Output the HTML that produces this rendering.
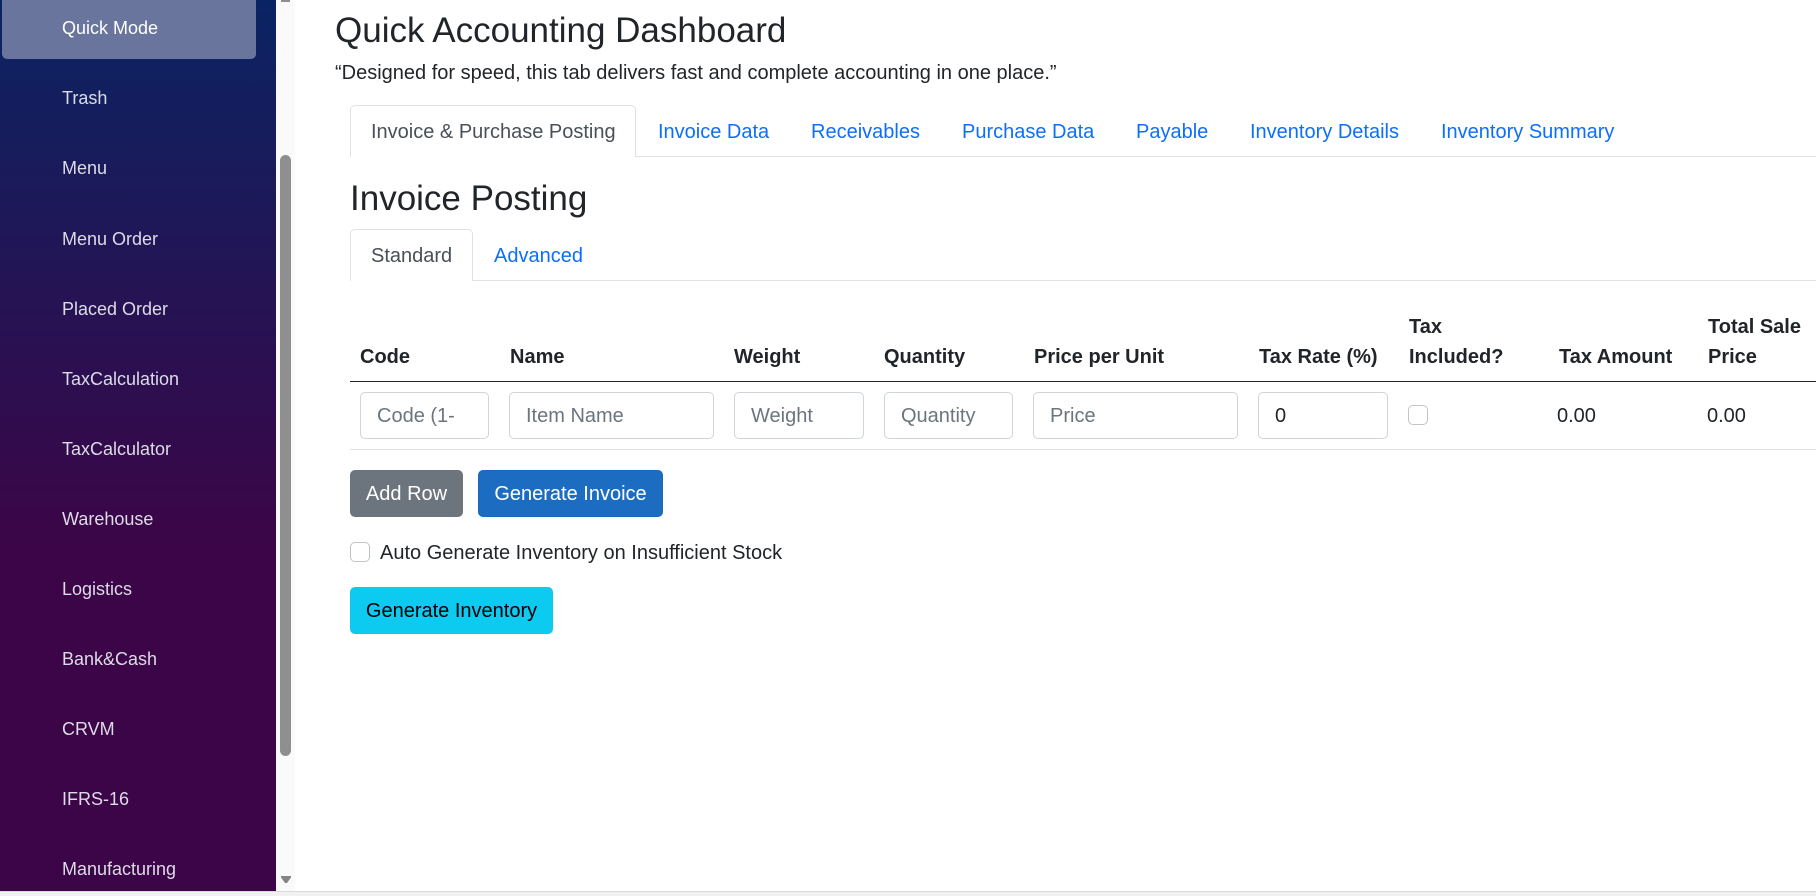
<!DOCTYPE html>
<html lang="en">
<head>
<meta charset="utf-8">
<title>Quick Accounting Dashboard</title>
<style>
html,body{margin:0;padding:0;width:1816px;height:896px;overflow:hidden;background:#fff;}
body{font-family:"Liberation Sans",Arial,sans-serif;font-size:20px;line-height:30px;color:#212529;position:relative;}
.a{position:absolute;white-space:nowrap;}
#side{position:absolute;left:0;top:0;width:276px;height:891px;background:linear-gradient(180deg,#0a2463 0,#3c0547 550px,#3c0547 891px);}
#active{position:absolute;left:2px;top:-10px;width:254px;height:69px;background:#6a759d;border-radius:5px;}
.s{position:absolute;left:62px;font-size:18px;line-height:26px;color:#dcdce6;white-space:nowrap;}
#gut{position:absolute;left:276px;top:0;width:19px;height:891px;background:#fafafa;}
#thumb{position:absolute;left:280px;top:155px;width:11px;height:601px;background:#8f8f8f;border-radius:6px;}
#bot{position:absolute;left:0;top:891px;width:1816px;height:5px;background:#f1f1f1;border-top:1px solid #d9d9d9;box-sizing:border-box;}
.t{color:#0d6efd;}
.th{font-weight:700;}
.box{position:absolute;box-sizing:border-box;}
input.f{position:absolute;box-sizing:border-box;height:47px;top:392px;border:1px solid #ced4da;border-radius:5px;background:#fff;padding:8px 16px 6px;font:20px/30px "Liberation Sans",Arial,sans-serif;color:#212529;margin:0;outline:none;}
input.f::placeholder{color:#6c757d;opacity:1;}
.cb{position:absolute;box-sizing:border-box;width:20px;height:20px;border:1px solid #bfc4c9;border-radius:5px;background:#fff;}
.btn{position:absolute;box-sizing:border-box;height:47px;top:470px;border-radius:5px;text-align:center;line-height:46px;white-space:nowrap;}
</style>
</head>
<body>
<div id="side">
  <div id="active"></div>
  <div class="s" style="top:15px;color:#fff">Quick Mode</div>
  <div class="s" style="top:85px">Trash</div>
  <div class="s" style="top:155px">Menu</div>
  <div class="s" style="top:226px">Menu Order</div>
  <div class="s" style="top:296px">Placed Order</div>
  <div class="s" style="top:366px">TaxCalculation</div>
  <div class="s" style="top:436px">TaxCalculator</div>
  <div class="s" style="top:506px">Warehouse</div>
  <div class="s" style="top:576px">Logistics</div>
  <div class="s" style="top:646px">Bank&amp;Cash</div>
  <div class="s" style="top:716px">CRVM</div>
  <div class="s" style="top:786px">IFRS-16</div>
  <div class="s" style="top:856px">Manufacturing</div>
</div>
<div id="gut"></div>
<div class="box" style="left:281px;top:0;width:9px;height:2px;background:#8f8f8f"></div>
<div id="thumb"></div>
<svg class="a" style="left:281px;top:876px" width="10" height="8" viewBox="0 0 10 8"><path d="M0 0H10V1.5L6 7H4L0 1.5Z" fill="#858585"/></svg>
<div id="bot"></div>

<div class="a" style="left:335px;top:10px;font-size:35px;line-height:42px">Quick Accounting Dashboard</div>
<div class="a" style="left:335px;top:58px;font-size:20px">“Designed for speed, this tab delivers fast and complete accounting in one place.”</div>

<div class="box" style="left:350px;top:156px;width:1466px;height:1px;background:#dee2e6"></div>
<div class="box" style="left:350px;top:105px;width:286px;height:52px;background:#fff;border:1px solid #dee2e6;border-bottom:0;border-radius:5px 5px 0 0"></div>
<div class="a" style="left:371px;top:117px;color:#495057">Invoice &amp; Purchase Posting</div>
<div class="a t" style="left:658px;top:117px">Invoice Data</div>
<div class="a t" style="left:811px;top:117px">Receivables</div>
<div class="a t" style="left:962px;top:117px">Purchase Data</div>
<div class="a t" style="left:1136px;top:117px">Payable</div>
<div class="a t" style="left:1250px;top:117px">Inventory Details</div>
<div class="a t" style="left:1441px;top:117px">Inventory Summary</div>

<div class="a" style="left:350px;top:178px;font-size:35px;line-height:42px">Invoice Posting</div>

<div class="box" style="left:350px;top:280px;width:1466px;height:1px;background:#dee2e6"></div>
<div class="box" style="left:350px;top:229px;width:123px;height:52px;background:#fff;border:1px solid #dee2e6;border-bottom:0;border-radius:5px 5px 0 0"></div>
<div class="a" style="left:371px;top:241px;color:#495057">Standard</div>
<div class="a t" style="left:494px;top:241px">Advanced</div>

<div class="a th" style="left:360px;top:342px">Code</div>
<div class="a th" style="left:510px;top:342px">Name</div>
<div class="a th" style="left:734px;top:342px">Weight</div>
<div class="a th" style="left:884px;top:342px">Quantity</div>
<div class="a th" style="left:1034px;top:342px">Price per Unit</div>
<div class="a th" style="left:1259px;top:342px">Tax Rate (%)</div>
<div class="a th" style="left:1409px;top:312px">Tax</div>
<div class="a th" style="left:1409px;top:342px">Included?</div>
<div class="a th" style="left:1559px;top:342px">Tax Amount</div>
<div class="a th" style="left:1708px;top:312px">Total Sale</div>
<div class="a th" style="left:1708px;top:342px">Price</div>
<div class="box" style="left:350px;top:381px;width:1466px;height:1px;background:#212529"></div>

<input class="f" type="number" placeholder="Code (1-1000)" style="left:360px;width:129px;padding-right:18px">
<input class="f" type="text" placeholder="Item Name" style="left:509px;width:205px">
<input class="f" type="number" placeholder="Weight" style="left:734px;width:130px">
<input class="f" type="number" placeholder="Quantity" style="left:884px;width:129px">
<input class="f" type="number" placeholder="Price" style="left:1033px;width:205px">
<input class="f" type="number" value="0" style="left:1258px;width:130px">
<div class="cb" style="left:1408px;top:405px"></div>
<div class="a" style="left:1557px;top:401px">0.00</div>
<div class="a" style="left:1707px;top:401px">0.00</div>
<div class="box" style="left:350px;top:449px;width:1466px;height:1px;background:#dee2e6"></div>

<div class="btn" style="left:350px;width:113px;background:#6c757d;color:#fff;border:1px solid #6c757d">Add Row</div>
<div class="btn" style="left:478px;width:185px;background:#1c6dc2;color:#fff;border:1px solid #1a66b8">Generate Invoice</div>
<div class="cb" style="left:350px;top:542px"></div>
<div class="a" style="left:380px;top:538px">Auto Generate Inventory on Insufficient Stock</div>
<div class="btn" style="left:350px;top:587px;width:203px;background:#0dcaf0;color:#000;border:1px solid #0dcaf0">Generate Inventory</div>
</body>
</html>
